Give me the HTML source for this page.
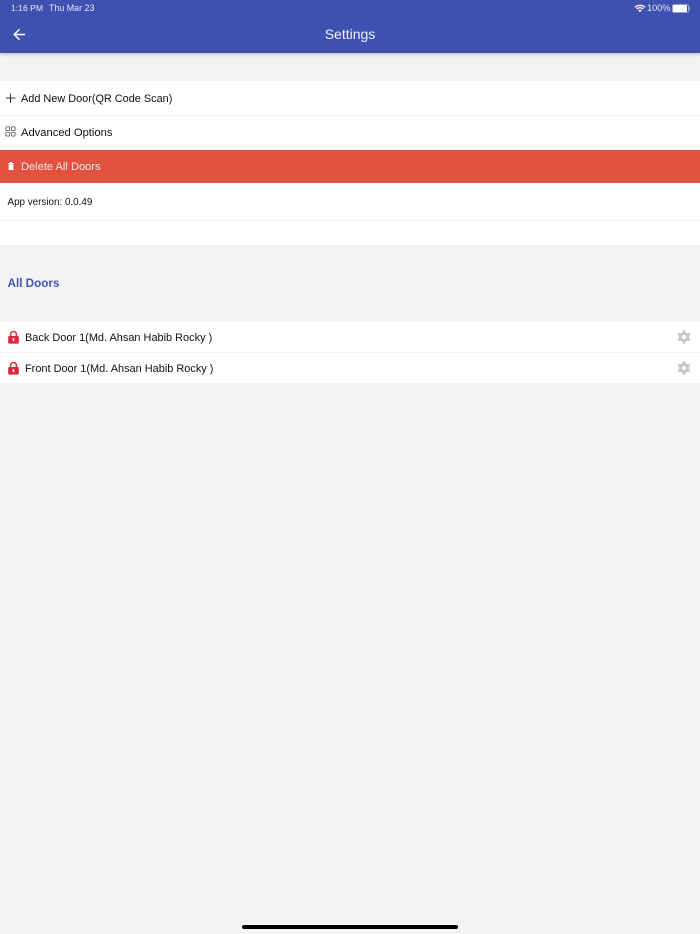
<!DOCTYPE html>
<html>
<head>
<meta charset="utf-8">
<style>
html,body{margin:0;padding:0}
body{width:700px;height:934px;background:#f3f3f3;position:relative;overflow:hidden;font-family:"Liberation Sans",sans-serif;color:#111}
.a{position:absolute}
.t{position:absolute;white-space:nowrap;line-height:1}
svg{position:absolute;overflow:visible}
</style>
</head>
<body>
<div class="a" style="left:0;top:0;width:700px;height:53px;background:#3f51b0;box-shadow:0 1px 4px rgba(0,0,0,.25)"></div>
<div class="t" style="left:11px;top:4px;font-size:8.6px;color:#e6e8f5">1:16 PM</div>
<div class="t" style="left:49px;top:4px;font-size:8.9px;color:#e6e8f5">Thu Mar 23</div>
<svg style="left:634px;top:4px" width="12" height="9" viewBox="0 0 12 9"><path d="M1 3.3C4 .6 8 .6 11 3.3M2.7 5C4.7 3.3 7.3 3.3 9.3 5" fill="none" stroke="#fff" stroke-width="1.4"/><path d="M4.3 6.4C5.3 5.6 6.7 5.6 7.7 6.4L6 8.2Z" fill="#fff"/></svg>
<div class="t" style="left:647px;top:4px;font-size:9.2px;color:#e6e8f5">100%</div>
<div class="a" style="left:672px;top:4px;width:15px;height:7px;border:1px solid rgba(255,255,255,.45);border-radius:2px;padding:0"></div>
<div class="a" style="left:673px;top:5px;width:14px;height:7px;background:#fff;border-radius:1px"></div>
<div class="a" style="left:689px;top:7px;width:1px;height:3px;background:rgba(255,255,255,.5)"></div>
<svg style="left:13px;top:28px" width="13" height="13" viewBox="0 0 13 13"><path d="M12 6.5H1.5M6.5 1.2L1.2 6.5L6.5 11.8" fill="none" stroke="#fff" stroke-width="1.4"/></svg>
<div class="t" style="left:0;width:700px;text-align:center;top:27px;font-size:14px;color:#f0f1fa">Settings</div>

<div class="a" style="left:0;top:81px;width:700px;height:34px;background:#fff"></div>
<div class="a" style="left:0;top:116px;width:700px;height:33px;background:#fff"></div>
<div class="a" style="left:0;top:150px;width:700px;height:33px;background:#e35141"></div>
<div class="a" style="left:0;top:183px;width:700px;height:37px;background:#fff"></div>
<div class="a" style="left:0;top:221px;width:700px;height:24px;background:#fff"></div>

<svg style="left:5px;top:92px" width="12" height="12" viewBox="0 0 12 12"><path d="M5.5 1.5V11M1 6H10.5" stroke="#333" stroke-width="1" fill="none"/></svg>
<div class="t" style="left:21px;top:93px;font-size:10.9px;color:#111;line-height:13px">Add New Door(QR Code Scan)</div>
<svg style="left:5px;top:126px" width="11" height="11" viewBox="0 0 11 11"><g fill="none" stroke="#666" stroke-width=".9"><rect x=".8" y=".8" width="3.8" height="3.8" rx="1"/><rect x="6.3" y=".8" width="3.8" height="3.8" rx="1"/><rect x=".8" y="6.3" width="3.8" height="3.8" rx="1"/><rect x="6.3" y="6.3" width="3.8" height="3.8" rx="1"/></g></svg>
<div class="t" style="left:21px;top:127px;font-size:11.2px;color:#111;line-height:13px">Advanced Options</div>
<svg style="left:8px;top:162px" width="6" height="8" viewBox="0 0 6 8"><path d="M0 1H6V2H0ZM.6 2.3H5.4V8H.6Z" fill="#fff"/><rect x="2" y="0" width="2" height="1" fill="#fff"/></svg>
<div class="t" style="left:21px;top:161px;font-size:11.1px;color:#fbe6e3;line-height:13px">Delete All Doors</div>
<div class="t" style="left:7.5px;top:197px;font-size:9.85px;color:#111;line-height:11px">App version: 0.0.49</div>

<div class="t" style="left:7.5px;top:277px;font-size:11.7px;font-weight:bold;color:#4354b5;line-height:13px">All Doors</div>

<div class="a" style="left:0;top:322px;width:700px;height:30px;background:#fff"></div>
<div class="a" style="left:0;top:353px;width:700px;height:30px;background:#fff"></div>

<svg style="left:8px;top:331px" width="11" height="13" viewBox="0 0 11 13"><path d="M2.6 6V3.4C2.6 -.4 8.4 -.4 8.4 3.4V6" fill="none" stroke="#d8283c" stroke-width="1.5"/><rect x=".2" y="5" width="10.6" height="7.6" rx="1" fill="#d8283c"/><rect x="4.7" y="7" width="1.6" height="3.2" fill="#fff"/></svg>
<div class="t" style="left:25px;top:332px;font-size:10.95px;color:#111;line-height:13px">Back Door 1(Md. Ahsan Habib Rocky )</div>
<svg style="left:8px;top:362px" width="11" height="13" viewBox="0 0 11 13"><path d="M2.6 6V3.4C2.6 -.4 8.4 -.4 8.4 3.4V6" fill="none" stroke="#d8283c" stroke-width="1.5"/><rect x=".2" y="5" width="10.6" height="7.6" rx="1" fill="#d8283c"/><rect x="4.7" y="7" width="1.6" height="3.2" fill="#fff"/></svg>
<div class="t" style="left:25px;top:363px;font-size:10.95px;color:#111;line-height:13px">Front Door 1(Md. Ahsan Habib Rocky )</div>

<svg style="left:677px;top:330px" width="14" height="14" viewBox="0 0 14 14"><circle cx="7" cy="7" r="3.6" fill="none" stroke="#c4c4c4" stroke-width="2.6"/><path d="M7 .4V3M7 11V13.6M1.3 3.7L3.5 5M10.5 9L12.7 10.3M1.3 10.3L3.5 9M10.5 5L12.7 3.7" stroke="#c4c4c4" stroke-width="2.6"/></svg>
<svg style="left:677px;top:361px" width="14" height="14" viewBox="0 0 14 14"><circle cx="7" cy="7" r="3.6" fill="none" stroke="#c4c4c4" stroke-width="2.6"/><path d="M7 .4V3M7 11V13.6M1.3 3.7L3.5 5M10.5 9L12.7 10.3M1.3 10.3L3.5 9M10.5 5L12.7 3.7" stroke="#c4c4c4" stroke-width="2.6"/></svg>

<div class="a" style="left:242px;top:925px;width:216px;height:3.5px;background:#000;border-radius:2px"></div>
</body>
</html>
